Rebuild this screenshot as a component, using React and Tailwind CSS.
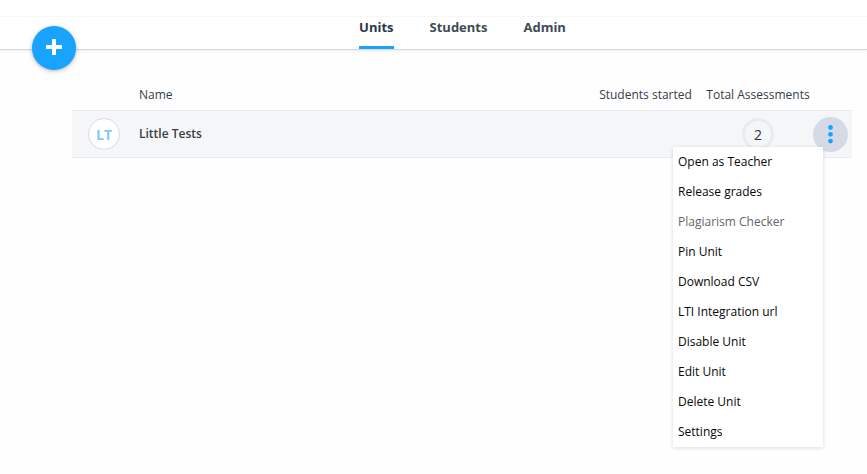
const tabs = ["Units", "Students", "Admin"];

const menuItems = [
  { label: "Open as Teacher" },
  { label: "Release grades" },
  { label: "Plagiarism Checker", disabled: true },
  { label: "Pin Unit" },
  { label: "Download CSV" },
  { label: "LTI Integration url" },
  { label: "Disable Unit" },
  { label: "Edit Unit" },
  { label: "Delete Unit" },
  { label: "Settings" },
];

function AddButton() {
  return (
    <button
      type="button"
      aria-label="Add unit"
      className="absolute -bottom-[21px] left-8 flex size-11 items-center justify-center rounded-full bg-[#18a3ff] shadow-[0_1px_4px_rgba(0,0,0,0.3)]"
    >
      <svg viewBox="0 0 16 16" className="mb-0.5 size-4" fill="#fff" aria-hidden="true">
        <rect x="6" y="0" width="4" height="16" rx="0.6" />
        <rect x="0" y="6" width="16" height="4" rx="0.6" />
      </svg>
    </button>
  );
}

function Header() {
  return (
    <header className="relative border-b border-[#d6d6d8] bg-white pt-4 shadow-[0_1px_3px_rgba(0,0,0,0.08)]">
      <nav className="flex justify-center gap-9 border-t border-[#f7f7f7] pl-[58px]">
        {tabs.map((tab, i) => (
          <a
            key={tab}
            href="#"
            aria-current={i === 0 ? "page" : undefined}
            className={
              i === 0
                ? "h-8 border-b-3 border-[#18a3ff] text-[13px] leading-5 font-bold text-[#2b3847]"
                : "h-8 text-[13px] leading-5 font-bold text-[#414a56]"
            }
          >
            {tab}
          </a>
        ))}
      </nav>
      <AddButton />
    </header>
  );
}

function UnitMenu() {
  return (
    <div
      role="menu"
      className="absolute top-[30px] right-[25px] z-10 w-[150px] bg-white shadow-[0_1px_4px_rgba(0,0,0,0.14)]"
    >
      {menuItems.map((item) => (
        <button
          key={item.label}
          type="button"
          role="menuitem"
          disabled={item.disabled}
          className="block h-[30px] w-full px-[5px] text-left text-[12px] text-[#080808] disabled:text-[#666]"
        >
          {item.label}
        </button>
      ))}
    </div>
  );
}

function UnitsTable() {
  return (
    <table className="w-full border-separate border-spacing-0 text-[12px] text-[#363d48]">
      <thead>
        <tr className="h-8 text-left">
          <th className="w-[67px] p-0" aria-label="Avatar" />
          <th className="p-0 pt-0.5 font-normal">Name</th>
          <th className="w-[115px] p-0 pt-0.5 text-center font-normal whitespace-nowrap">
            Students started
          </th>
          <th className="w-[110px] p-0 pt-0.5 text-center font-normal whitespace-nowrap">
            Total Assessments
          </th>
          <th className="w-[39px] p-0" aria-label="Actions" />
        </tr>
      </thead>
      <tbody>
        <tr className="h-12 bg-[#f5f6f8]">
          <td className="border-y border-[#e9ecf1] p-0 pl-4">
            <div className="flex size-8 items-center justify-center rounded-full border border-[#d9dce8] bg-white text-[14px] font-bold text-[#80c8ff]">
              LT
            </div>
          </td>
          <td className="border-y border-[#e9ecf1] p-0 font-semibold">Little Tests</td>
          <td className="border-y border-[#e9ecf1] p-0" />
          <td className="border-y border-[#e9ecf1] p-0">
            <div className="mx-auto flex size-8 items-center justify-center rounded-full border-3 border-[#e9ebf1] text-[14px] text-[#333]">
              2
            </div>
          </td>
          <td className="border-y border-[#e9ecf1] p-0">
            <div className="relative size-[35px]">
              <button
                type="button"
                aria-label="Unit actions"
                aria-haspopup="menu"
                aria-expanded="true"
                className="flex size-full items-center justify-center rounded-full bg-[#d6dae6]"
              >
                <svg viewBox="0 0 5 19" className="h-[19px] w-[5px]" fill="#18a3ff" aria-hidden="true">
                  <circle cx="2.5" cy="2.5" r="2.4" />
                  <circle cx="2.5" cy="9.3" r="2.4" />
                  <circle cx="2.5" cy="16.1" r="2.4" />
                </svg>
              </button>
              <UnitMenu />
            </div>
          </td>
        </tr>
      </tbody>
    </table>
  );
}

export default function App() {
  return (
    <div className="min-h-screen bg-[#fefefe] font-['Open_Sans',sans-serif]">
      <Header />
      <main className="pt-7 pr-[15px] pl-[72px]">
        <UnitsTable />
      </main>
    </div>
  );
}
